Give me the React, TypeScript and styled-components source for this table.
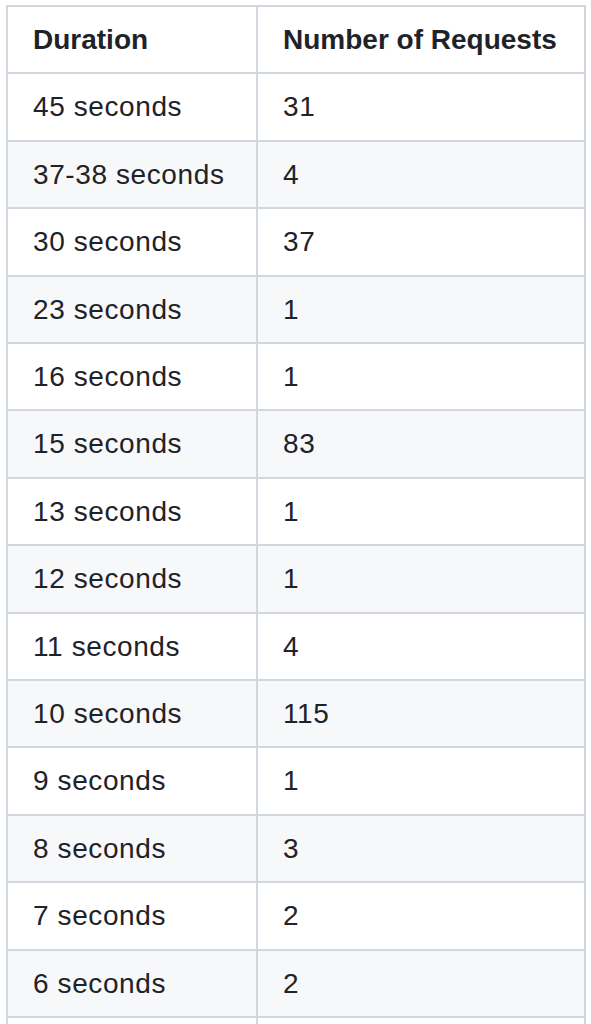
import React from "react";
import styled, { createGlobalStyle } from "styled-components";

const Global = createGlobalStyle`
  html, body { margin: 0; padding: 0; background: #ffffff; }
  body { font-family: "Liberation Sans", Arial, sans-serif; color: #1f2328; }
`;

const Wrap = styled.div`
  padding: 5px 0 0 6px;
  height: 1024px;
  overflow: hidden;
  box-sizing: border-box;
`;

const Table = styled.table`
  border-collapse: collapse;
  border-spacing: 0;
  width: 578px;
  table-layout: fixed;
  font-size: 28px;
  line-height: 41.4px;
`;

const HeadCell = styled.th<{ $w: number }>`
  box-sizing: border-box;
  width: ${(p) => p.$w}px;
  text-align: left;
  font-weight: 700;
  padding: 12px 25px;
  border: 2px solid #d0d7de;
  color: #1f2328;
  white-space: nowrap;
`;

const Row = styled.tr<{ $striped: boolean }>`
  background: ${(p) => (p.$striped ? "#f6f8fa" : "#ffffff")};
  border-top: 2px solid #d8dee4;
`;

const Cell = styled.td`
  padding: 12px 25px;
  border: 2px solid #d0d7de;
  color: #1f2328;
  letter-spacing: 0.6px;
  white-space: nowrap;
  height: 41.4px;
`;

const rows: [string, string][] = [
  ["45 seconds", "31"],
  ["37-38 seconds", "4"],
  ["30 seconds", "37"],
  ["23 seconds", "1"],
  ["16 seconds", "1"],
  ["15 seconds", "83"],
  ["13 seconds", "1"],
  ["12 seconds", "1"],
  ["11 seconds", "4"],
  ["10 seconds", "115"],
  ["9 seconds", "1"],
  ["8 seconds", "3"],
  ["7 seconds", "2"],
  ["6 seconds", "2"],
  ["", ""],
];

export default function App() {
  return (
    <>
      <Global />
      <Wrap>
        <Table>
          <thead>
            <tr>
              <HeadCell $w={250}>Duration</HeadCell>
              <HeadCell $w={328}>Number of Requests</HeadCell>
            </tr>
          </thead>
          <tbody>
            {rows.map(([d, n], i) => (
              <Row key={i} $striped={i % 2 === 1}>
                <Cell>{d}</Cell>
                <Cell>{n}</Cell>
              </Row>
            ))}
          </tbody>
        </Table>
      </Wrap>
    </>
  );
}
